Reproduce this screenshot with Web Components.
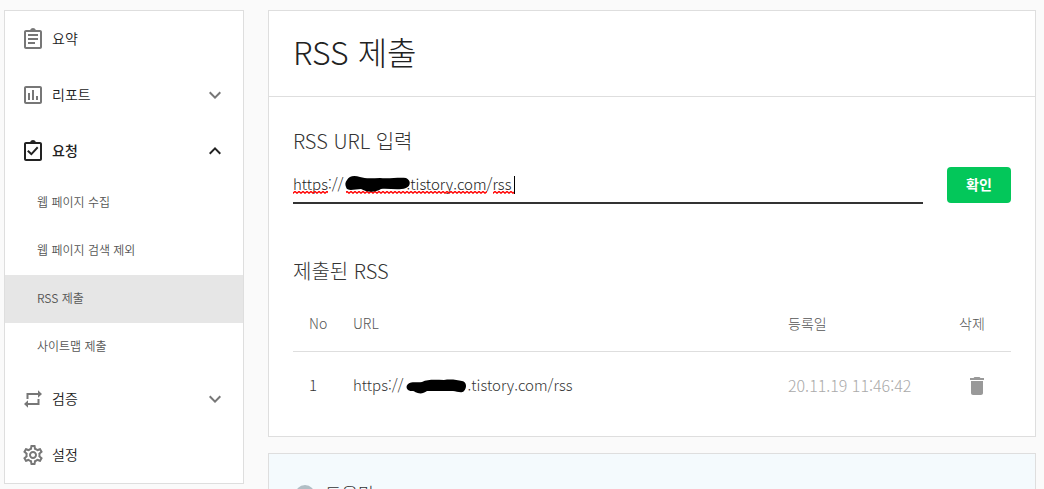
<!DOCTYPE html>
<html lang="ko">
<head>
<meta charset="utf-8">
<title>RSS 제출</title>
<style>
  html { background: #fafafa; scrollbar-width: none; }
  body {
    margin: 0;
    color: #333;
    font-family: "Noto Sans CJK KR", "Noto Sans", sans-serif;
    font-weight: 300;
    font-size: 14px;
    line-height: 20px;
  }
</style>
</head>
<body>
<console-layout>
  <side-menu slot="side">
    <menu-entry icon="summary" label="요약"></menu-entry>
    <menu-entry icon="report" label="리포트" state="closed"></menu-entry>
    <menu-entry icon="request" label="요청" state="open">
      <sub-entry>웹 페이지 수집</sub-entry>
      <sub-entry>웹 페이지 검색 제외</sub-entry>
      <sub-entry current>RSS 제출</sub-entry>
      <sub-entry>사이트맵 제출</sub-entry>
    </menu-entry>
    <menu-entry icon="verify" label="검증" state="closed"></menu-entry>
    <menu-entry icon="settings" label="설정"></menu-entry>
  </side-menu>
  <panel-card>
    <span slot="title">RSS 제출</span>
    <rss-form></rss-form>
    <rss-list></rss-list>
  </panel-card>
  <help-card></help-card>
</console-layout>

<script>
const ICONS = {
  summary: '<path d="M7 15h7v2H7zm0-4h10v2H7zm0-4h10v2H7zm12-4h-4.18C14.4 1.84 13.3 1 12 1c-1.3 0-2.4.84-2.82 2H5c-1.1 0-2 .9-2 2v15c0 1.1.9 2 2 2h14c1.1 0 2-.9 2-2V5c0-1.1-.9-2-2-2zm0 17H5V5h14v15z"/>',
  report: '<path d="M9 17H7v-7h2v7zm4 0h-2V7h2v10zm4 0h-2v-4h2v4zm2 2H5V5h14v14zm0-16H5c-1.1 0-2 .9-2 2v14c0 1.1.9 2 2 2h14c1.1 0 2-.9 2-2V5c0-1.1-.9-2-2-2z"/>',
  request: '<path d="M19 3h-4.18C14.4 1.84 13.3 1 12 1s-2.4.84-2.82 2H5c-1.1 0-2 .9-2 2v15c0 1.1.9 2 2 2h14c1.1 0 2-.9 2-2V5c0-1.1-.9-2-2-2zm0 17H5V5h14v15zM17.400 9l-1.400-1.400-5.600 6.100-2.900-2.700L6.100 12.400l4.300 4.100z"/>',
  verify: '<path d="M5.500 6H17V3.300L21 7l-4 3.700V8H7.500v4h-2zM18.500 18H7v2.700L3 17l4-3.700V16h9.500v-4h2z"/>',
  settings: '<path d="M19.430 12.980c.04-.32.07-.64.07-.98 0-.34-.03-.66-.07-.98l2.110-1.650c.19-.15.24-.42.12-.64l-2-3.460c-.09-.16-.26-.25-.44-.25-.06 0-.12.010-.17.030l-2.490 1c-.52-.4-1.080-.73-1.690-.98l-.38-2.650C14.460 2.180 14.250 2 14 2h-4c-.25 0-.46.18-.49.42l-.38 2.650c-.61.25-1.170.59-1.690.98l-2.490-1c-.06-.02-.12-.03-.18-.03-.17 0-.34.09-.43.25l-2 3.460c-.13.22-.07.49.12.64l2.110 1.650c-.04.32-.07.65-.07.98 0 .33.03.66.07.98l-2.110 1.650c-.19.15-.24.42-.12.64l2 3.460c.09.16.26.25.44.25.06 0 .12-.01.17-.03l2.490-1c.52.4 1.080.73 1.690.98l.38 2.650c.03.24.24.42.49.42h4c.25 0 .46-.18.49-.42l.38-2.650c.61-.25 1.170-.59 1.690-.98l2.490 1c.06.02.12.03.18.03.17 0 .34-.09.43-.25l2-3.460c.12-.22.07-.49-.12-.64l-2.110-1.650zm-1.980-1.710c.04.31.05.52.05.73 0 .21-.02.43-.05.73l-.14 1.130.89.7 1.080.84-.7 1.210-1.270-.51-1.040-.42-.9.68c-.43.32-.84.56-1.250.73l-1.060.43-.16 1.130-.2 1.350h-1.400l-.19-1.350-.16-1.130-1.060-.43c-.43-.18-.83-.41-1.230-.71l-.91-.7-1.060.43-1.270.51-.7-1.210 1.080-.84.89-.7-.14-1.130c-.03-.31-.05-.54-.05-.74s.02-.43.05-.73l.14-1.130-.89-.7-1.080-.84.7-1.210 1.270.51 1.040.42.9-.68c.43-.32.84-.56 1.250-.73l1.060-.43.16-1.130.2-1.350h1.390l.19 1.350.16 1.130 1.060.43c.43.18.83.41 1.230.71l.91.7 1.060-.43 1.270-.51.7 1.210-1.070.85-.89.7.14 1.130zM12 8c-2.210 0-4 1.790-4 4s1.790 4 4 4 4-1.790 4-4-1.790-4-4-4zm0 6c-1.100 0-2-.9-2-2s.9-2 2-2 2 .9 2 2-.9 2-2 2z"/>',
  closed: '<path d="M16.590 8.590L12 13.170 7.410 8.590 6 10l6 6 6-6z"/>',
  open: '<path d="M12 8l-6 6 1.410 1.410L12 10.830l4.590 4.580L18 14z"/>',
  trash: '<path d="M6 19c0 1.100.9 2 2 2h8c1.100 0 2-.9 2-2V7H6v12zM19 4h-3.500l-1-1h-5l-1 1H5v2h14V4z"/>'
};
const svg = name => `<svg viewBox="0 0 24 24" width="24" height="24" aria-hidden="true">${ICONS[name]}</svg>`;

function define(name, render) {
  customElements.define(name, class extends HTMLElement {
    constructor() { super(); this.attachShadow({ mode: 'open' }); }
    connectedCallback() {
      this.shadowRoot.innerHTML = `<style>*{box-sizing:border-box}svg{display:block;fill:currentColor}</style>` + render(this);
    }
  });
}

define('console-layout', () => `
  <style>
    :host { display: flex; align-items: flex-start; gap: 24px; padding: 10px 8px 24px 4px; }
    aside { flex: 0 0 240px; }
    main { flex: 1; min-width: 0; display: grid; gap: 16px; }
  </style>
  <aside><slot name="side"></slot></aside>
  <main><slot></slot></main>`);

define('side-menu', () => `
  <style>:host { display: block; background: #fff; border: 1px solid #dedede; }</style>
  <nav aria-label="메뉴"><slot></slot></nav>`);

define('menu-entry', el => {
  const state = el.getAttribute('state');
  const inner = `${svg(el.getAttribute('icon'))}<span>${el.getAttribute('label')}</span>`;
  return `
  <style>
    :host { display: block; }
    a, button { display: flex; align-items: center; gap: 7px; width: 100%; height: 56px; padding: 0 16px 1px;
      border: 0; background: none; color: #222; font: inherit; font-weight: 350; text-align: left; text-decoration: none; }
    span { flex: 1; padding-bottom: 2px; }
    svg { color: #777; }
    .open { font-weight: 500; }
    .open svg { color: #222; }
  </style>
  ${state ? `<button type="button" class="${state}" aria-expanded="${state === 'open'}">${inner}${svg(state)}</button>`
          : `<a href="#">${inner}</a>`}
  <slot></slot>`;
});

define('sub-entry', el => `
  <style>
    :host { display: block; }
    :host([current]) { background: #e6e6e6; }
    a { display: flex; align-items: center; height: 48px; padding: 0 32px 2px; color: #555; font-size: 12px; font-weight: 350; text-decoration: none; }
  </style>
  <a href="#"${el.hasAttribute('current') ? ' aria-current="page"' : ''}><slot></slot></a>`);

define('panel-card', () => `
  <style>
    :host { display: block; background: #fff; border: 1px solid #dedede; }
    h1 { margin: 0; padding: 18px 24px 23px; border-bottom: 1px solid #dedede; font-size: 32px; line-height: 44px; font-weight: 300; color: #222; }
    div { padding: 28px 24px 16px; }
  </style>
  <h1><slot name="title"></slot></h1>
  <div><slot></slot></div>`);

define('rss-form', () => `
  <style>
    :host { display: block; }
    form { display: grid; grid-template-columns: 1fr 64px; column-gap: 24px; row-gap: 10px; }
    label { grid-column: 1 / -1; font-size: 20px; line-height: 32px; }
    .field { position: relative; height: 37px; border-bottom: 2px solid #333; }
    input { width: 100%; height: 35px; padding: 0 0 2px; border: 0; outline: 0; background: none; color: #222; font: inherit; font-size: 15px; }
    .marks { position: absolute; left: 0; top: 0; width: 240px; height: 35px; fill: none; }
    button { height: 36px; padding: 0 0 2px; border: 0; border-radius: 4px; background: #03c75a; color: #fff; font: inherit; font-weight: 700; }
  </style>
  <form onsubmit="return false">
    <label for="url">RSS URL 입력</label>
    <div class="field">
      <input id="url" type="text" spellcheck="false" value="https://${'\u00a0'.repeat(15)}.tistory.com/rss">
      <svg class="marks" viewBox="0 0 240 35" aria-hidden="true">
        <defs><pattern id="wave" width="4" height="3" y="24" patternUnits="userSpaceOnUse"><path d="M-1 3L2 .5L5 3" stroke="#f00" stroke-width="1.400" fill="none"/></pattern></defs>
        <path fill="url(#wave)" d="M0 24h35v3H0zM53 24h141v3H53zM200 24h21v3h-21z"/>
        <path fill="#000" d="M54 13C56 9 61 8 67 10C73 12 80 11 87 11C96 12 106 10 113 11C118 13 118 19 113 21C105 24 96 21 88 22C82 26 73 25 68 22C62 22 54 25 53 20C52 18 52 15 54 13Z"/>
        <path stroke="#000" d="M221.500 9v18"/>
      </svg>
    </div>
    <button type="submit">확인</button>
  </form>`);

define('rss-list', () => `
  <style>
    :host { display: block; padding-top: 51px; }
    h2 { margin: 0; font-size: 20px; line-height: 32px; font-weight: 300; }
    table { width: 100%; margin-top: 9px; border-collapse: separate; border-spacing: 0; table-layout: fixed; font-size: 15px; }
    th, td { padding: 0 0 2px 16px; text-align: left; font-weight: 300; }
    th { height: 56px; border-bottom: 1px solid #dedede; color: #555; font-size: 14px; }
    td { height: 68px; }
    .no { width: 44px; } .date { width: 171px; } .del { width: 68px; }
    td.date { color: #aaa; font-size: 16px; }
    td.del { padding: 0 22px; }
    .url span { display: flex; align-items: center; }
    .url svg { width: 64px; height: 20px; fill: #000; }
    button { display: block; padding: 0; border: 0; background: none; color: #999; }
  </style>
  <h2>제출된 RSS</h2>
  <table>
    <thead><tr><th class="no">No</th><th class="url">URL</th><th class="date">등록일</th><th class="del">삭제</th></tr></thead>
    <tbody><tr>
      <td class="no">1</td>
      <td class="url"><span>https://<svg viewBox="0 0 64 20" aria-hidden="true"><path d="M4 9C8 6 13 8 18 7C24 4 32 5 40 5C47 4 53 5 58 6C63 7 63 13 60 16C57 19 53 16 49 16C40 16 30 16 23 16C19 19 15 19 11 17C10 15 7 17 4 15C2 13 2 11 4 9Z"/></svg>.tistory.com/rss</span></td>
      <td class="date">20.11.19 11:46:42</td>
      <td class="del"><button type="button" aria-label="RSS 삭제">${svg('trash')}</button></td>
    </tr></tbody>
  </table>`);

define('help-card', () => `
  <style>
    :host { display: block; padding: 26px 24px; border: 1px solid #dedede; background: #f4fafd; }
    h2 { display: flex; align-items: center; gap: 8px; margin: 0; font-size: 18px; line-height: 26px; font-weight: 300; }
    span { padding-bottom: 4px; }
    svg { fill: #b0bec5; }
  </style>
  <h2><svg viewBox="0 0 24 24" width="24" height="24" aria-hidden="true"><path d="M12 2a10 10 0 1 0 0 20 10 10 0 0 0 0-20zm1 15h-2v-6h2zm0-8h-2V7h2z"/></svg><span>도움말</span></h2>`);
</script>
</body>
</html>
